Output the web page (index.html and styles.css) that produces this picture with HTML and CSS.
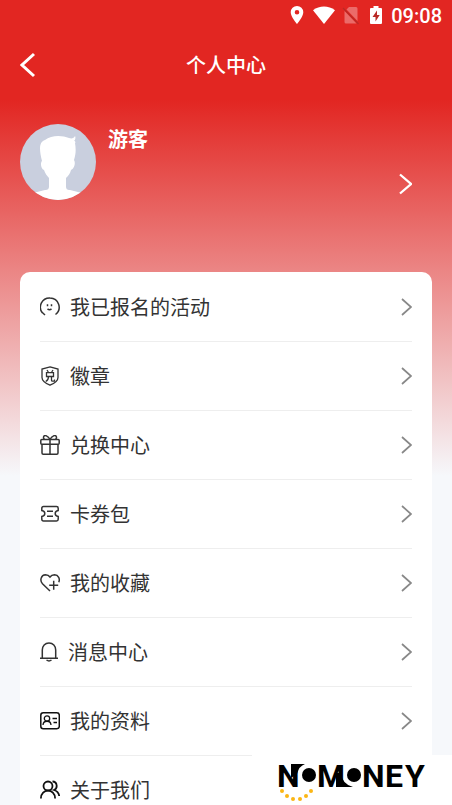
FILE: index.html
```html
<!DOCTYPE html>
<html lang="zh-CN">
<head>
<meta charset="utf-8">
<meta name="viewport" content="width=device-width, initial-scale=1">
<title>个人中心</title>
<link rel="stylesheet" href="styles.css">
</head>
<body>
<div class="screen">
  <div class="status">
    <svg width="14" height="20" viewBox="0 0 14 20"><path fill="#fff" fill-rule="evenodd" d="M7 0a6.300 6.300 0 0 0-6.300 6.300C.7 11 7 18 7 18s6.300-7 6.300-11.700A6.300 6.300 0 0 0 7 0zm0 4a2.300 2.300 0 1 1 0 4.600A2.300 2.300 0 0 1 7 4z"/></svg>
    <svg class="wifi" width="22" height="20" viewBox="0 0 22 20"><path fill="#fff" d="M11 18 0 4.200C6.500-.8 15.500-.8 22 4.200z"/></svg>
    <svg class="sim" width="18" height="20" viewBox="0 0 18 20"><path fill="#fff" fill-opacity=".32" d="M7 1h7a1.500 1.500 0 0 1 1.500 1.500v12.500L4.500 3.500zM2.500 5 14.500 17.500H4A1.500 1.500 0 0 1 2.500 16z"/><path stroke="#b92a26" stroke-width="1.200" d="m1 2 15.500 16"/></svg>
    <svg class="battery" width="12" height="20" viewBox="0 0 12 20"><path fill="#fff" d="M3.500 0h5v2H11a1 1 0 0 1 1 1v14a1 1 0 0 1-1 1H1a1 1 0 0 1-1-1V3a1 1 0 0 1 1-1h2.500z"/><path fill="#b92a26" d="M7 4.500 2.500 11h3v4.500L9.700 9H7z"/></svg>
    <time class="clock">09:08</time>
  </div>
  <header class="bar">
    <button class="back" aria-label="返回"><svg width="16" height="26" viewBox="0 0 16 26"><path d="M14 2 2 13l12 11" fill="none" stroke="#fff" stroke-width="3"/></svg></button>
    <h1 class="title">个人中心</h1>
  </header>
  <a class="profile" href="#profile">
    <svg class="avatar" width="76" height="76" viewBox="0 0 76 76"><defs><clipPath id="round"><circle cx="38" cy="38" r="38"/></clipPath></defs><g clip-path="url(#round)"><path fill="#c9cfde" d="M0 0h76v76H0z"/><path fill="#fff" d="M22 37C19 25 19 18 25 16c6-5 17-5 24-2 3 1 5 0 6-2 1 2 0 4-1 5 1 0 2 1 1 2 1 6 1 11-1 17 2 3 0 9-3 10-1 4-3 6-5 8v8c0 3 1 4 4 4l12 3v8H13v-8l12-3c3 0 4-1 4-4v-8c-2-2-4-5-5-8-3-1-4-7-2-9z"/></g></svg>
    <span class="name">游客</span>
    <svg class="enter" width="14" height="24" viewBox="0 0 14 24"><path d="m2 2.500 11 9.500-11 9.500" fill="none" stroke="#fff" stroke-width="2.300"/></svg>
  </a>
  <main class="card">
    <a class="row" href="#events">
      <svg class="icon" viewBox="0 0 20 20"><path d="M2.300 15.800A9.200 9.200 0 0 1 10 1a9.200 9.200 0 0 1 5.500 16.500M2.300 15.500l2.700 2.500M7.500 7.200v2M11.500 7.200v2M7.500 12q2 1.300 4 0"/></svg>
      <span class="label">我已报名的活动</span><svg class="chevron" viewBox="0 0 12 20"><path d="m2 2 9 8-9 8"/></svg></a>
    <a class="row" href="#badges">
      <svg class="icon" viewBox="0 0 20 20"><g stroke-width="1.300"><path d="M10 .8 18 3v8.500c0 3.500-4 6-8 7.700-4-1.700-8-4.200-8-7.700V3z"/><path d="m7 4 1.300 2M13 4l-1.300 2M6.500 6.700h7v3.800h-7zM8.500 10.500c0 2.500-.8 4-2.800 5M11.500 10.500v3.700q0 1 1 1h2v-1.700"/></g></svg>
      <span class="label">徽章</span><svg class="chevron" viewBox="0 0 12 20"><path d="m2 2 9 8-9 8"/></svg></a>
    <a class="row" href="#exchange">
      <svg class="icon" viewBox="0 0 20 20"><rect x=".8" y="4.500" width="18.400" height="4.700" rx="1"/><path d="M2 9.200v8.800q0 1.200 1.200 1.200h13.600q1.200 0 1.200-1.200V9.200M10 4.500v14.700M10 4.500C8 .5 4.500-.3 3.700 1.500 3.300 2.500 3.500 3.500 4.500 4.500M10 4.500c2-4 5.500-4.800 6.300-3 .4 1 .2 2-.8 3"/></svg>
      <span class="label">兑换中心</span><svg class="chevron" viewBox="0 0 12 20"><path d="m2 2 9 8-9 8"/></svg></a>
    <a class="row" href="#coupons">
      <svg class="icon" viewBox="0 0 20 20"><path d="M3.500 2.500h13q1.700 0 1.700 1.700v2.300c-4 .7-4 5.300 0 6v2.800q0 1.700-1.700 1.700h-13q-1.700 0-1.700-1.700v-2.800c4-.7 4-5.300 0-6V4.200q0-1.700 1.700-1.700zM7 7.200h6M7 12.300h6"/></svg>
      <span class="label">卡券包</span><svg class="chevron" viewBox="0 0 12 20"><path d="m2 2 9 8-9 8"/></svg></a>
    <a class="row" href="#favorites">
      <svg class="icon" viewBox="0 0 20 20"><path d="M10 18 2.500 10.700C-.5 7.500 1 2 5.500 1.700c2 0 3.500.8 4.500 2.300 1-1.500 2.500-2.300 4.500-2.300 4 .2 5.700 4.300 4.300 7.500M13.700 7.700v9M9.200 12.200h9"/></svg>
      <span class="label">我的收藏</span><svg class="chevron" viewBox="0 0 12 20"><path d="m2 2 9 8-9 8"/></svg></a>
    <a class="row" href="#messages">
      <svg class="icon bell" viewBox="0 0 18 20"><path d="M0 16.200h18M2.300 16V8C2.300 4 5 1 9 1s6.700 3 6.700 7v8M6.500 18q2.500 1.800 5 0"/></svg>
      <span class="label">消息中心</span><svg class="chevron" viewBox="0 0 12 20"><path d="m2 2 9 8-9 8"/></svg></a>
    <a class="row" href="#info">
      <svg class="icon dark" viewBox="0 0 20 20"><rect x=".8" y="1.700" width="18.500" height="16" rx="2.500"/><g stroke-width="1.300"><circle cx="7" cy="7.500" r="2.700"/><path d="M3 14c.3-5 7.700-5 8 0M12.500 7.500H17M13.500 11.500H17"/></g></svg>
      <span class="label">我的资料</span><svg class="chevron" viewBox="0 0 12 20"><path d="m2 2 9 8-9 8"/></svg></a>
    <a class="row" href="#about">
      <svg class="icon dark" viewBox="0 0 20 20"><g stroke-width="1.800"><circle cx="8" cy="6" r="4.500"/><path d="M.9 18.500c0-10.500 14.200-10.500 14.200 0M12.500 1.500c5 .2 5.500 7 1.500 8.500 3.300 1 4.800 3 5.200 6"/></g></svg>
      <span class="label">关于我们</span><svg class="chevron" viewBox="0 0 12 20"><path d="m2 2 9 8-9 8"/></svg></a>
  </main>
  <aside class="brand">
    <svg width="200" height="50" viewBox="0 0 200 50" role="img" aria-label="NOMONEY">
      <g class="wordmark"><text x="25" y="32">N</text><text x="65" y="32">M</text><text x="110" y="32">N</text><text x="133" y="32">E</text><text x="153" y="32">Y</text></g>
      <path d="M39 9h14q-6 2-8 10l-6 4zM84 18h5q1 11 12 14H84z"/>
      <circle cx="57" cy="20" r="9" fill="#fff"/><circle cx="102" cy="20" r="9" fill="#fff"/>
      <circle cx="57" cy="20" r="7"/><circle cx="102" cy="20" r="7"/>
      <g fill="#fbb615"><circle cx="30" cy="36" r="2"/><circle cx="35" cy="41" r="2"/><circle cx="41" cy="44" r="2"/><circle cx="48" cy="44" r="2"/><circle cx="54" cy="41" r="2"/><circle cx="59" cy="36" r="2"/></g>
    </svg>
  </aside>
</div>
</body>
</html>
```
FILE: styles.css
```css
* { box-sizing: border-box; }
body {
  margin: 0;
  font-family: "Noto Sans CJK SC", sans-serif;
  font-size: 20px;
  color: #333;
}
a { color: inherit; text-decoration: none; }
svg { display: block; flex: none; }
.screen {
  height: 100vh;
  overflow: hidden;
  background: #f6f8fb linear-gradient(#e22622 0, #e22622 100px, #f6f8fb 476px) no-repeat;
}
.status {
  display: flex;
  justify-content: flex-end;
  align-items: center;
  height: 32px;
  padding: 0 10px;
}
.wifi { margin-left: 9px; }
.sim { margin-left: 7px; }
.battery { margin-left: 10px; }
.clock {
  margin-left: 9px;
  font: 500 20px/32px Roboto, sans-serif;
  color: #fff;
}
.bar {
  display: grid;
  grid-template-columns: 40px 1fr 40px;
  align-items: center;
  height: 66px;
  padding: 0 20px;
}
.back {
  padding: 0;
  border: 0;
  background: none;
}
.title {
  margin: 0;
  font-size: 20px;
  font-weight: 500;
  line-height: 30px;
  text-align: center;
  color: #fff;
}
.profile {
  display: flex;
  align-items: flex-start;
  gap: 12px;
  height: 148px;
  margin: 26px 40px 0 20px;
}
.name {
  flex: 1;
  font-weight: 700;
  line-height: 30px;
  color: #fff;
}
.enter { margin-top: 48px; }
.card {
  margin: 0 20px;
  padding: 1px 20px;
  border-radius: 10px;
  background: #fff;
}
.row {
  display: flex;
  align-items: center;
  gap: 10px;
  height: 69px;
  border-bottom: 1px solid #eee;
}
.icon {
  width: 20px;
  height: 20px;
  fill: none;
  stroke: #333;
  stroke-width: 1.5;
}
.bell { width: 18px; }
.dark { stroke: #111; }
.label {
  flex: 1;
  line-height: 32px;
}
.chevron {
  width: 12px;
  height: 20px;
  fill: none;
  stroke: #888;
  stroke-width: 1.7;
}
.brand {
  position: fixed;
  right: 0;
  bottom: 0;
  background: #fff;
}
.wordmark {
  font: 700 32px Roboto, sans-serif;
}
```
